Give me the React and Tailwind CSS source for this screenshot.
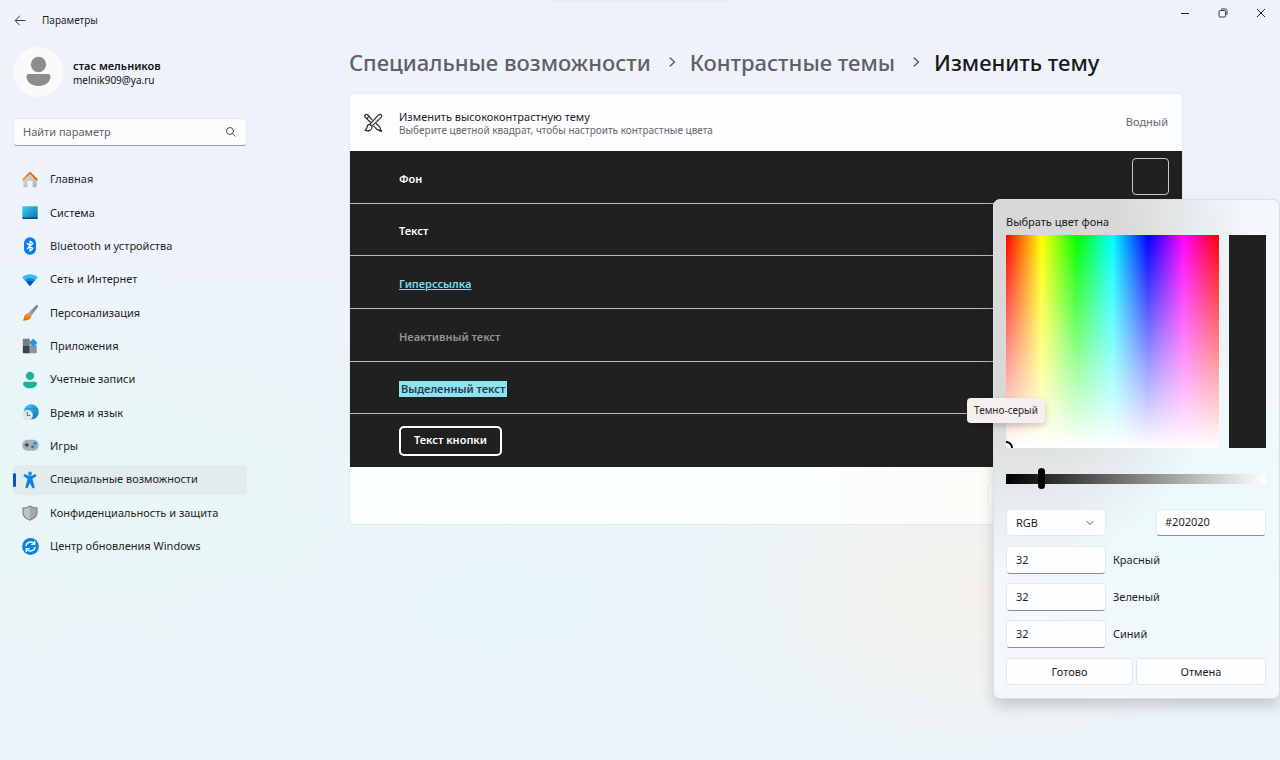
import React, { useState } from "react";
import { ChevronDown } from "lucide-react";

function HomeIcon() {
  return (
    <svg viewBox="0 0 16 16" className="size-4" aria-hidden="true">
      <defs>
        <linearGradient id="home-wall" x1="0" y1="0" x2="1" y2="1">
          <stop offset="0" stopColor="#dedee0" />
          <stop offset="1" stopColor="#b0b0b4" />
        </linearGradient>
        <linearGradient id="home-roof" x1="0" y1="0" x2="1" y2="0">
          <stop offset="0" stopColor="#f39a34" />
          <stop offset="1" stopColor="#dc5a12" />
        </linearGradient>
      </defs>
      <path d="M8 1.600 14.700 8V14.600a.7.7 0 0 1-.7.7H10.600V9.600a.8.8 0 0 0-.8-.8H6.200a.8.8 0 0 0-.8.8V15.300H2a.7.7 0 0 1-.7-.7V8Z" fill="url(#home-wall)" />
      <path d="M1.100 7.600 8 .8 14.900 7.600" fill="none" stroke="url(#home-roof)" strokeWidth="1.900" strokeLinecap="round" strokeLinejoin="round" />
    </svg>
  );
}

function SystemIcon() {
  return (
    <svg viewBox="0 0 16 16" className="size-4" aria-hidden="true">
      <defs>
        <linearGradient id="sys-screen" x1="0" y1="0" x2="1" y2="1">
          <stop offset="0" stopColor="#3fd0e4" />
          <stop offset="1" stopColor="#0d6cb8" />
        </linearGradient>
      </defs>
      <rect x=".3" y="1.200" width="15.400" height="12.800" rx="1" fill="url(#sys-screen)" />
      <path d="M.3 12.600h15.400V13a1 1 0 0 1-1 1H1.300a1 1 0 0 1-1-1Z" fill="#0b4a7e" />
    </svg>
  );
}

function BluetoothIcon() {
  return (
    <svg viewBox="0 0 16 18" className="h-[18px] w-4" aria-hidden="true">
      <rect x="2" y=".3" width="12" height="17.400" rx="5.800" fill="#0a7cf6" />
      <path d="m5.200 6.300 5.600 5.200L8 14V4l2.800 2.500-5.600 5.200" fill="none" stroke="#fff" strokeWidth="1.200" strokeLinejoin="round" strokeLinecap="round" />
    </svg>
  );
}

function NetworkIcon() {
  return (
    <svg viewBox="0 0 16 16" className="size-4" aria-hidden="true">
      <path d="M.4 5.700a.5.500 0 0 1 0-.8C4.800 1.400 11.200 1.400 15.600 4.900a.5.500 0 0 1 0 .8L8.400 13.400a.5.500 0 0 1-.8 0Z" fill="#35bdf0" />
      <path d="M2.700 8C5.800 5.300 10.200 5.300 13.300 8L8.400 13.400a.5.500 0 0 1-.8 0Z" fill="#1187dc" />
      <path d="M4.800 10.300C6.700 8.700 9.300 8.700 11.200 10.300L8.400 13.400a.5.500 0 0 1-.8 0Z" fill="#0b4fa8" />
    </svg>
  );
}

function BrushIcon() {
  return (
    <svg viewBox="0 0 16 16" className="size-4" aria-hidden="true">
      <defs>
        <linearGradient id="brush-handle" x1="1" y1="0" x2="0" y2="1">
          <stop offset="0" stopColor="#6f7680" />
          <stop offset="1" stopColor="#a9afb6" />
        </linearGradient>
        <linearGradient id="brush-tip" x1="1" y1="0" x2="0" y2="1">
          <stop offset="0" stopColor="#f9a23a" />
          <stop offset="1" stopColor="#e05a10" />
        </linearGradient>
      </defs>
      <path d="M15.700.3c.6.6.3 1.500-.2 2.300L9.300 11 6.200 8.100 13.400.9c.7-.7 1.700-1.200 2.300-.6Z" fill="url(#brush-handle)" />
      <path d="M6.600 8.300c1.600.3 2.700 1.400 2.700 2.900-.4 3-2.900 4.500-8.900 4.400 1.600-1 1.400-2.500 2-4.300.5-1.700 2.200-3.300 4.200-3Z" fill="url(#brush-tip)" />
    </svg>
  );
}

function AppsIcon() {
  return (
    <svg viewBox="0 0 16 16" className="size-4" aria-hidden="true">
      <path d="M1.600 .8H7.800V8H.8V1.600a.8.800 0 0 1 .8-.8Z" fill="#777c83" />
      <path d="M.8 8h7v7.300H1.600a.8.8 0 0 1-.8-.8Z" fill="#3f4349" />
      <path d="M7.800 7.200h7v7.300a.8.8 0 0 1-.8.8H7.800Z" fill="#8f949b" />
      <rect x="8.300" y="1.700" width="6" height="6" rx=".8" transform="rotate(45 11.300 4.700)" fill="#1c9be8" />
    </svg>
  );
}

function AccountsIcon() {
  return (
    <svg viewBox="0 0 16 18" className="h-[18px] w-4" aria-hidden="true">
      <circle cx="8" cy="4.900" r="4.200" fill="#22b09b" />
      <path d="M3 10.800h10a1.900 1.900 0 0 1 1.900 1.900c0 2.700-2.900 4.500-6.900 4.500s-6.900-1.800-6.900-4.500A1.900 1.900 0 0 1 3 10.800Z" fill="#17b695" />
    </svg>
  );
}

function TimeIcon() {
  return (
    <svg viewBox="0 0 17 17" className="size-[17px]" aria-hidden="true">
      <defs>
        <linearGradient id="time-globe" x1="0" y1="0" x2="1" y2="1">
          <stop offset="0" stopColor="#4fd0ea" />
          <stop offset="1" stopColor="#0f6fc4" />
        </linearGradient>
      </defs>
      <circle cx="9.200" cy="7.800" r="7.600" fill="url(#time-globe)" />
      <path d="M9 .4c2.500 2 3.400 4.500 3.300 7.400S11 13.600 9 15.200M3 4.500h12.800M10 11h6" stroke="#1583cf" strokeWidth=".6" fill="none" />
      <circle cx="5.600" cy="11.200" r="5.200" fill="#e4e5e7" />
      <path d="M5.300 8.300v3.200h2.400" stroke="#666b72" strokeWidth="1" fill="none" strokeLinecap="round" />
    </svg>
  );
}

function GamesIcon() {
  return (
    <svg viewBox="0 0 17 16" className="h-4 w-[17px]" aria-hidden="true">
      <rect x=".3" y="1.700" width="16.400" height="11" rx="5" fill="#abb0b8" />
      <path d="M4.800 4.900v4.200M2.700 7h4.200" stroke="#3d4249" strokeWidth="1.300" />
      <circle cx="13" cy="5.300" r="1.400" fill="#1479d2" />
      <circle cx="10.600" cy="8.800" r="1.500" fill="#1479d2" />
      <circle cx="13.200" cy="8.500" r="1" fill="#4aa0e4" />
    </svg>
  );
}

function AccessibilityIcon() {
  return (
    <svg viewBox="0 0 16 18" className="h-[18px] w-4" aria-hidden="true">
      <circle cx="8" cy="2.400" r="2" fill="#1c94e4" />
      <path
        d="M1.700 4c.4-.7 1.100-.8 1.800-.4 2.800 1.600 6.200 1.600 9 0 .7-.4 1.400-.3 1.800.4.300.7 0 1.300-.7 1.700l-2.800 1.700c-.3.200-.4.500-.3.900l2.100 7.500c.1.700-.1 1.300-.9 1.500-.7.200-1.300-.1-1.600-.8L8 12.200l-2.100 4.300c-.3.700-.9 1-1.600.8-.8-.2-1-.8-.9-1.500l2.100-7.500c.1-.4 0-.7-.3-.9L2.400 5.700C1.700 5.300 1.400 4.700 1.700 4Z"
        fill="#0e82dc"
      />
    </svg>
  );
}

function PrivacyIcon() {
  return (
    <svg viewBox="0 0 16 16" className="size-4" aria-hidden="true">
      <path d="M8 .3c2.100 1.500 4.600 2.200 7.600 2.300v5.200c0 3.700-2.800 6.300-7.600 8C3.200 14.100.4 11.500.4 7.800V2.600C3.400 2.500 5.900 1.800 8 .3Z" fill="#85888c" />
      <path d="M8 1.700c1.800 1.200 4 1.800 6.400 1.900v4.200c0 3-2.200 5.200-6.400 6.800Z" fill="#a4a7ab" />
      <path d="M8 1.700C6.200 2.900 4 3.500 1.600 3.600v4.200c0 3 2.200 5.200 6.400 6.800Z" fill="#bfc1c4" />
    </svg>
  );
}

function UpdateIcon() {
  return (
    <svg viewBox="0 0 17 17" className="size-[17px]" aria-hidden="true">
      <circle cx="8.500" cy="8.500" r="8.400" fill="#0c84dc" />
      <path d="M4 7.600a4.700 4.700 0 0 1 8.300-1.700M13 9.400a4.700 4.700 0 0 1-8.300 1.700" stroke="#fff" strokeWidth="1.400" fill="none" strokeLinecap="round" />
      <path d="M12.700 3.500v2.900H9.800M4.300 13.500v-2.900h2.900" stroke="#fff" strokeWidth="1.300" fill="none" strokeLinecap="round" strokeLinejoin="round" />
    </svg>
  );
}

function SearchIcon() {
  return (
    <svg viewBox="0 0 12 12" className="size-3" fill="none" stroke="#4a4d50" strokeLinecap="round" aria-hidden="true">
      <circle cx="5" cy="5" r="3.500" />
      <path d="m7.600 7.600 2.700 2.700" />
    </svg>
  );
}

function ThemeIcon() {
  return (
    <svg viewBox="0 0 20 20" className="size-5" fill="none" stroke="#2c2c2c" strokeWidth="1.200" strokeLinejoin="round" strokeLinecap="round" aria-hidden="true">
      <path d="M18.200 1.800c-.8-.7-2-.5-2.900.4L7.600 10.700c-.9 1 .9 2.800 1.900 1.900l8.300-8c.9-.9 1.100-2.100.4-2.800Z" />
      <path d="M7.400 11.500c-1.900-.2-3 .7-3.300 2.300-.2 1.400-.8 2.700-2 3.500 3.300 1.200 7 .2 7-3.900" />
      <path d="M7.400 9 2.300 4.600a1.800 1.800 0 0 1 0-2.600 1.800 1.800 0 0 1 2.600 0L9 6.800M3.800 5.600l1.900-1.900" />
      <path d="m13.300 10.500 3.300 3.300 1.700 4.300-4.400-1.700-3.200-3.200" />
      <path d="m18.200 18-1.500-.6" strokeWidth="1.800" />
    </svg>
  );
}

function CrumbSeparator() {
  return (
    <svg viewBox="0 0 7 10" className="ml-[18px] mr-[14px] h-[10px] w-[7px]" fill="none" stroke="#5b5e61" strokeWidth="1.500" strokeLinecap="round" strokeLinejoin="round" aria-hidden="true">
      <path d="m1.200 1 4.300 4-4.300 4" />
    </svg>
  );
}

const navItems = [
  { label: "Главная", Icon: HomeIcon },
  { label: "Система", Icon: SystemIcon },
  { label: "Bluetooth и устройства", Icon: BluetoothIcon },
  { label: "Сеть и Интернет", Icon: NetworkIcon },
  { label: "Персонализация", Icon: BrushIcon },
  { label: "Приложения", Icon: AppsIcon },
  { label: "Учетные записи", Icon: AccountsIcon },
  { label: "Время и язык", Icon: TimeIcon },
  { label: "Игры", Icon: GamesIcon },
  { label: "Специальные возможности", Icon: AccessibilityIcon, active: true },
  { label: "Конфиденциальность и защита", Icon: PrivacyIcon },
  { label: "Центр обновления Windows", Icon: UpdateIcon },
];

function TitleBar() {
  return (
    <header className="relative flex h-10 items-start justify-between">
      <div className="flex h-10 items-center pl-[14px]">
        <button type="button" aria-label="Назад" className="flex w-7 items-center">
          <svg viewBox="0 0 12 12" className="size-3" fill="none" stroke="#3c3e40" strokeLinecap="round" strokeLinejoin="round" aria-hidden="true">
            <path d="M1.500 6.500h9.500M5.500 2 1.200 6.500l4.300 4.500" />
          </svg>
        </button>
        <span className="text-[10px] text-[#1f1f1f]">Параметры</span>
      </div>
      <div className="absolute left-1/2 top-0 h-[2px] w-[182px] -translate-x-1/2 rounded-b bg-[#e7ecf1]" />
      <div className="flex h-[26px] text-[#222]">
        <button type="button" aria-label="Свернуть" className="flex w-[38px] items-center justify-center">
          <svg viewBox="0 0 10 10" className="size-[10px]" stroke="currentColor" aria-hidden="true">
            <path d="M1 5.500h8" />
          </svg>
        </button>
        <button type="button" aria-label="Восстановить" className="flex w-[38px] items-center justify-center">
          <svg viewBox="0 0 10 10" className="size-[10px]" stroke="currentColor" fill="none" strokeWidth=".9" aria-hidden="true">
            <rect x="1" y="2.500" width="6.500" height="6.500" rx="1.200" />
            <path d="M3 1h4.500A1.500 1.500 0 0 1 9 2.500V7" />
          </svg>
        </button>
        <button type="button" aria-label="Закрыть" className="flex w-[38px] items-center justify-center">
          <svg viewBox="0 0 10 10" className="size-[10px]" stroke="currentColor" aria-hidden="true">
            <path d="m1 1 8 8M9 1 1 9" />
          </svg>
        </button>
      </div>
    </header>
  );
}

function Sidebar() {
  return (
    <aside className="w-[234px] shrink-0 pt-[7px]">
      <div className="flex items-center gap-[10px]">
        <svg viewBox="0 0 50 50" className="size-[50px]" aria-hidden="true">
          <circle cx="25" cy="25" r="25" fill="#fafafa" />
          <circle cx="25.500" cy="17.500" r="7.700" fill="#8d8d8d" />
          <path d="M16 27h19a2.500 2.500 0 0 1 2.500 2.500c0 5.500-5 9.500-12 9.500s-12-4-12-9.500A2.500 2.500 0 0 1 16 27Z" fill="#8d8d8d" />
        </svg>
        <div className="pt-[2px] leading-[14px] text-[#111]">
          <div className="text-[11px] font-semibold">стас мельников</div>
          <div className="text-[10px]">melnik909@ya.ru</div>
        </div>
      </div>
      <div className="mt-[21px] flex h-7 items-center rounded-[4px] border border-[#e3e8ee] border-b-[#9a9ea2] bg-[#fbfcfe] px-[9px]">
        <input
          type="text"
          aria-label="Найти параметр"
          placeholder="Найти параметр"
          className="min-w-0 flex-1 bg-transparent text-[11px] text-[#1f1f1f] outline-none placeholder:text-[#5f6265]"
        />
        <SearchIcon />
      </div>
      <nav className="mt-[17px]">
        <ul className="grid h-[400px] auto-rows-fr">
          {navItems.map(({ label, Icon, active }) => (
            <li key={label} className="flex items-center">
              <a
                href="#"
                aria-current={active ? "page" : undefined}
                className={
                  active
                    ? "relative flex h-[30px] w-full items-center rounded-[4px] bg-[#e3ecec] text-[11px] text-[#1f1f1f]"
                    : "flex h-[30px] w-full items-center rounded-[4px] text-[11px] text-[#1f1f1f]"
                }
              >
                {active && <span className="absolute left-0 top-2 h-[14px] w-[3px] rounded-full bg-[#0a55b5]" />}
                <span className="mr-[3px] flex w-[34px] justify-center">
                  <Icon />
                </span>
                {label}
              </a>
            </li>
          ))}
        </ul>
      </nav>
    </aside>
  );
}

function ChannelField({ id, label, value, onChange }) {
  return (
    <div className="flex items-center gap-[7px]">
      <input
        id={id}
        type="text"
        value={value}
        onChange={(e) => onChange(e.target.value)}
        className="h-7 w-[100px] rounded-[4px] border border-[#e3e9ec] border-b-[#8a8d90] bg-[#fdfeff] px-[9px] pb-[2px] text-[11px] text-[#1f1f1f] outline-none"
      />
      <label htmlFor={id} className="text-[11px] text-[#1f1f1f]">
        {label}
      </label>
    </div>
  );
}

function ColorPicker() {
  const [rgb, setRgb] = useState(["32", "32", "32"]);
  const [hex, setHex] = useState("#202020");
  const [level, setLevel] = useState(32);
  const setChannel = (i) => (v) => setRgb(rgb.map((c, k) => (k === i ? v : c)));

  return (
    <section
      aria-label="Выбрать цвет фона"
      className="absolute right-[-111px] top-[41px] z-10 w-[287px] rounded-[7px] border border-[#d9dfe3] bg-[#f2f8fb] bg-[radial-gradient(ellipse_230px_310px_at_25px_60px,#d8d8d8_45%,transparent),radial-gradient(ellipse_190px_170px_at_200px_310px,#ebfafa,transparent)] py-[13px] pl-3 pr-[13px] font-normal shadow-[0_8px_14px_rgba(0,0,0,0.16)]"
    >
      <h2 className="text-[11px] leading-[18px] text-[#1a1a1a]">Выбрать цвет фона</h2>
      <div className="mt-1 flex justify-between">
        <div className="relative size-[213px] overflow-hidden bg-[linear-gradient(to_top,#fff,transparent),linear-gradient(to_right,#f00,#ff0,#0f0,#0ff,#00f,#f0f,#f00)]">
          <span className="absolute bottom-[-7px] left-[-7px] size-[14px] rounded-full border-2 border-black" />
        </div>
        <div className="w-[37px] bg-[#202020]" />
        <div role="tooltip" className="absolute left-[-27px] top-[198px] rounded-[4px] bg-[#f4f0ee] px-[7px] text-[10px] leading-[25px] text-[#2b2b2b] shadow-[0_3px_6px_rgba(0,0,0,0.2)]">
          Темно-серый
        </div>
      </div>
      <input
        type="range"
        aria-label="Яркость"
        min="0"
        max="255"
        value={level}
        onChange={(e) => setLevel(e.target.value)}
        className="mt-5 block h-[21px] w-full appearance-none bg-[linear-gradient(to_right,#000,#fff)] bg-[length:100%_10px] bg-center bg-no-repeat [&::-webkit-slider-thumb]:h-[21px] [&::-webkit-slider-thumb]:w-[7px] [&::-webkit-slider-thumb]:appearance-none [&::-webkit-slider-thumb]:rounded-full [&::-webkit-slider-thumb]:bg-black"
      />
      <div className="mt-5 flex justify-between">
        <div className="relative w-[100px]">
          <select
            aria-label="Цветовая модель"
            className="h-[27px] w-full appearance-none rounded-[4px] border border-[#e3e9ec] bg-[#fbfdfe] px-[9px] text-[11px] text-[#1f1f1f] outline-none"
          >
            <option>RGB</option>
            <option>HSV</option>
          </select>
          <ChevronDown className="pointer-events-none absolute right-[10px] top-2 size-3 text-[#444]" strokeWidth={1.8} />
        </div>
        <input
          type="text"
          aria-label="Шестнадцатеричный код"
          value={hex}
          onChange={(e) => setHex(e.target.value)}
          className="h-[27px] w-[110px] rounded-[4px] border border-[#e3e9ec] border-b-[#8a8d90] bg-[#fdfeff] px-2 pb-[2px] text-[11px] text-[#1f1f1f] outline-none"
        />
      </div>
      <div className="mt-[10px] flex flex-col gap-[9px]">
        <ChannelField id="red" label="Красный" value={rgb[0]} onChange={setChannel(0)} />
        <ChannelField id="green" label="Зеленый" value={rgb[1]} onChange={setChannel(1)} />
        <ChannelField id="blue" label="Синий" value={rgb[2]} onChange={setChannel(2)} />
      </div>
      <div className="mt-[10px] grid grid-cols-[127fr_130fr] gap-[3px] text-[11px] text-[#1f1f1f]">
        <button type="button" className="h-[27px] rounded-[4px] border border-[#e0e7ea] bg-[#fcfeff]">
          Готово
        </button>
        <button type="button" className="h-[27px] rounded-[4px] border border-[#e0e7ea] bg-[#fcfeff]">
          Отмена
        </button>
      </div>
    </section>
  );
}

function ThemeRow({ children, last }) {
  return (
    <div
      className={
        last
          ? "flex items-center justify-between pl-[49px] pr-[13px]"
          : "flex items-center justify-between border-b border-[#b4bcbc] pl-[49px] pr-[13px]"
      }
    >
      {children}
    </div>
  );
}

function ThemeEditor() {
  return (
    <main className="min-w-0 flex-1 pt-[7px]">
      <nav aria-label="Навигация" className="flex items-center text-[22px] font-medium leading-[30px] text-[#5f6164]">
        <a href="#">Специальные возможности</a>
        <CrumbSeparator />
        <a href="#">Контрастные темы</a>
        <CrumbSeparator />
        <h1 className="text-[#1a1a1a]">Изменить тему</h1>
      </nav>
      <div className="mt-4 rounded-[5px] border border-[#e3e9ee] bg-[#fcfdff]">
        <div className="flex h-[57px] items-center pl-[13px] pr-[14px]">
          <ThemeIcon />
          <div className="ml-4 flex-1">
            <div className="text-[11px] leading-[15px] text-[#1f1f1f]">Изменить высококонтрастную тему</div>
            <div className="text-[10px] leading-[13px] text-[#66686b]">
              Выберите цветной квадрат, чтобы настроить контрастные цвета
            </div>
          </div>
          <span className="text-[11px] text-[#6a6c6f]">Водный</span>
        </div>
        <div className="grid h-[316px] auto-rows-fr bg-[#202020] text-[11px] font-semibold text-white">
          <ThemeRow>
            <span className="mt-1">Фон</span>
            <div className="relative">
              <button type="button" aria-label="Цвет фона" className="block size-[37px] rounded-[4px] border border-[#c8c8c8] bg-[#202020]" />
              <ColorPicker />
            </div>
          </ThemeRow>
          <ThemeRow>
            <span className="mt-1">Текст</span>
          </ThemeRow>
          <ThemeRow>
            <a href="#" className="mt-1 text-[#75dfee] underline">
              Гиперссылка
            </a>
          </ThemeRow>
          <ThemeRow>
            <span className="mt-1 text-[#949494]">Неактивный текст</span>
          </ThemeRow>
          <ThemeRow>
            <span className="mt-1 bg-[#8ee3f0] px-[2px] leading-4 text-[#263b50]">Выделенный текст</span>
          </ThemeRow>
          <ThemeRow last>
            <button type="button" className="h-[30px] rounded-[5px] border-2 border-white px-[13px]">
              Текст кнопки
            </button>
          </ThemeRow>
        </div>
        <div className="flex h-[57px] items-center justify-end rounded-b-[5px] bg-[linear-gradient(to_right,#f9fefe,#fafefe_55%,#fcfbf8_75%,#fcfbf9)] pr-[13px]">
          <div className="h-[27px] w-[181px] rounded-[4px] border border-[#f0f0ee] bg-[#fdfdfc]" />
        </div>
      </div>
    </main>
  );
}

export default function App() {
  return (
    <div className="min-h-screen bg-[#ecf4fa] bg-[radial-gradient(ellipse_280px_170px_at_76%_78%,#f4f1ea,transparent),radial-gradient(ellipse_420px_220px_at_2%_62%,#e7f7f5,transparent),radial-gradient(ellipse_600px_300px_at_40%_80%,#e9f6f9,transparent),linear-gradient(to_bottom,#eef3fa_0%,#eef3fb_30%,transparent_60%)] font-['Noto_Sans','Open_Sans',sans-serif]">
      <TitleBar />
      <div className="flex gap-[102px] pl-[13px] pr-[97px]">
        <Sidebar />
        <ThemeEditor />
      </div>
    </div>
  );
}
